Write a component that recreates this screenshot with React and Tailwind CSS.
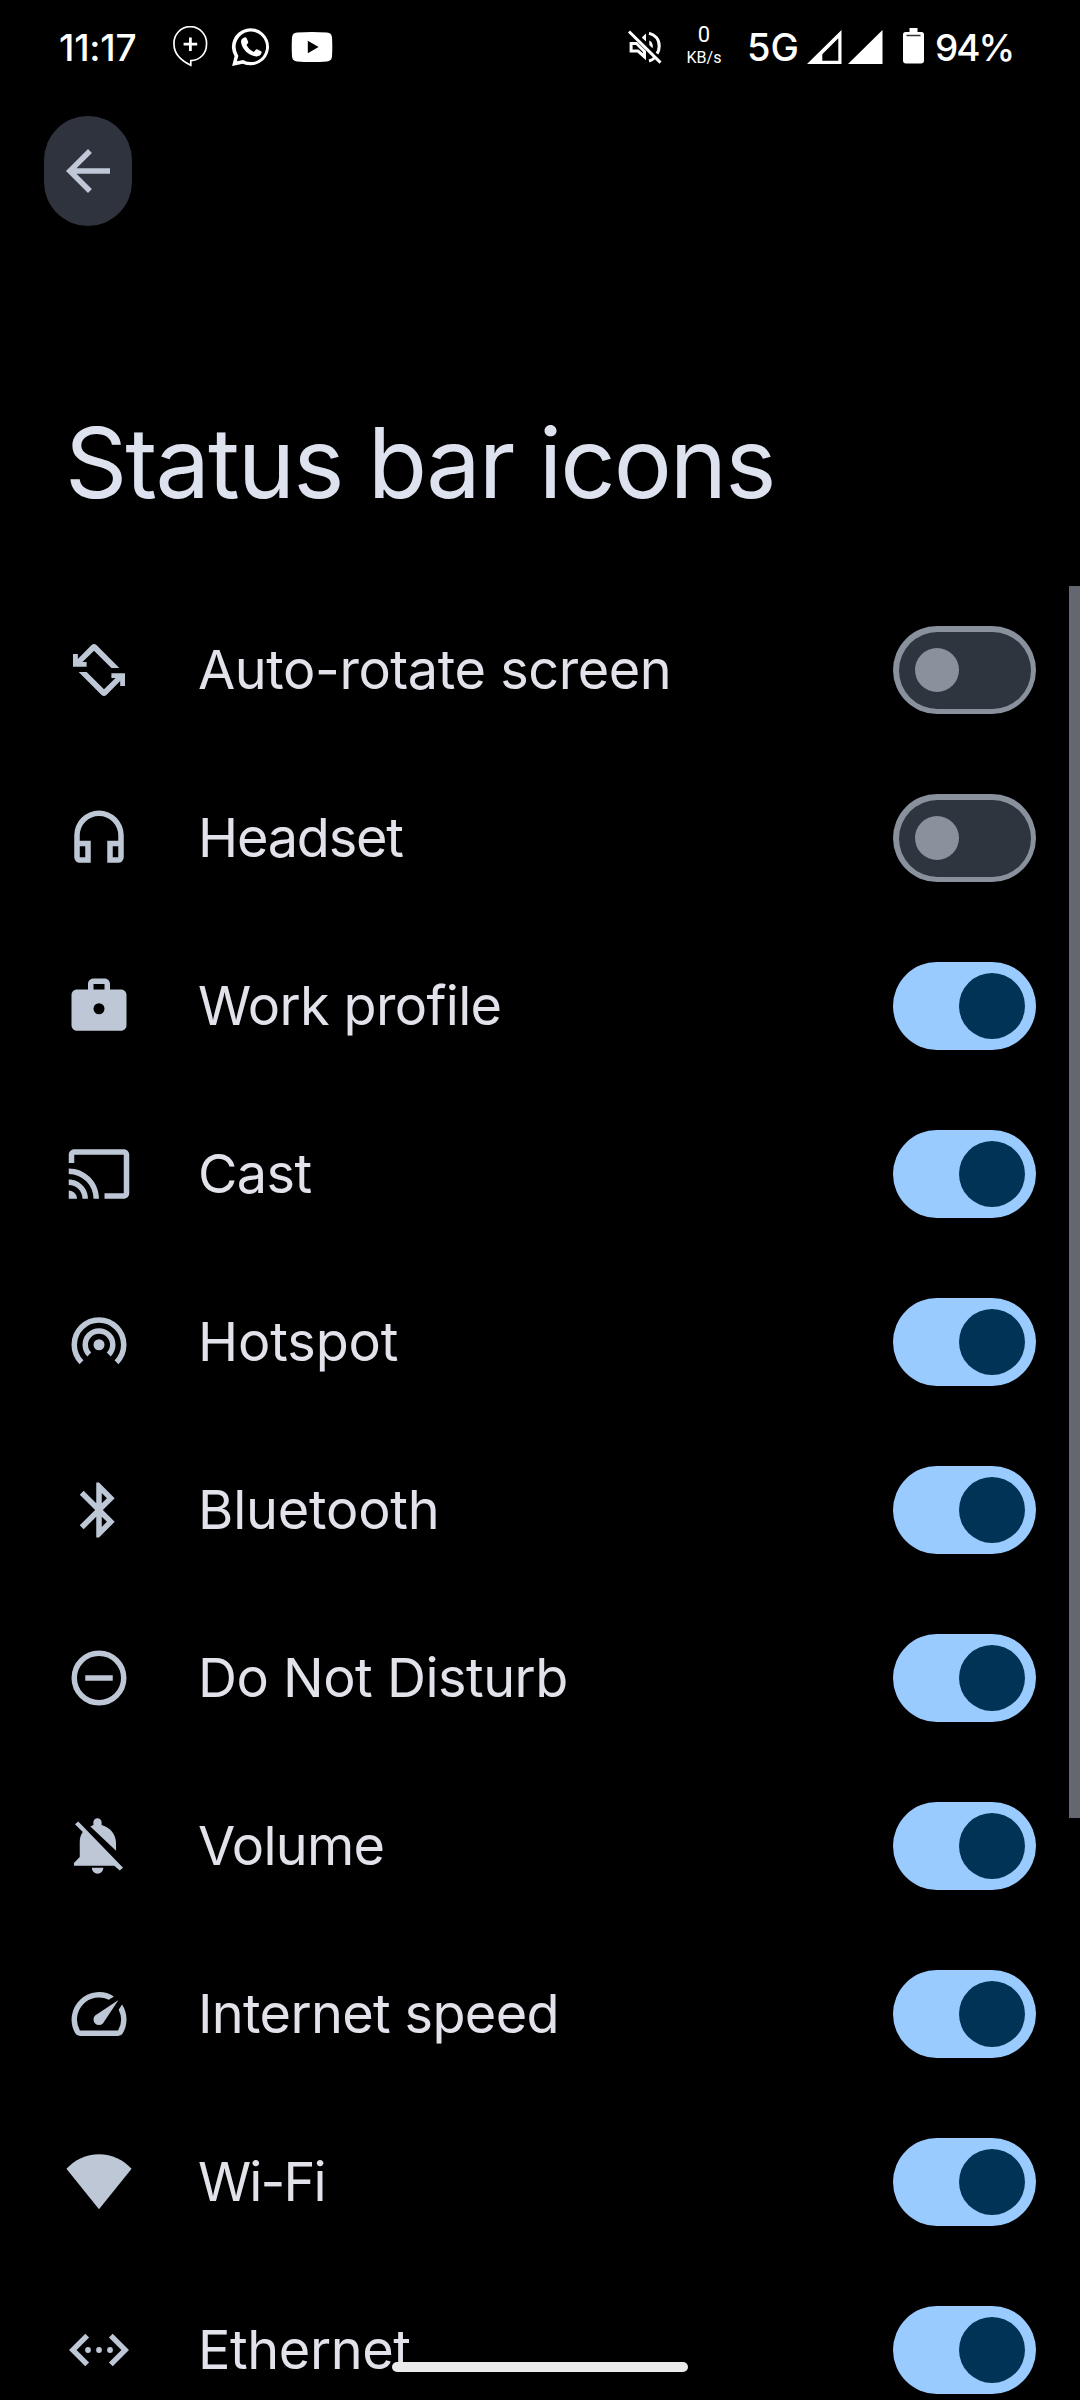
const glyphs = {
  rotate: (
    <g>
      <path d="M2.54 6.2H4.3V8L9.3 2.95Q10.18 2.15 11.06 2.95L19.4 11.27H16.5L10.18 5 6 9.1H7.5V10.8H2.54Z" />
      <path d="M21.46 17.8H19.7V16L14.7 21.05Q13.82 21.85 12.94 21.05L4.6 12.73H7.5L13.82 19 18 14.9H16.5V13.2H21.46Z" />
    </g>
  ),
  headset: (
    <path d="M12 2a9 9 0 0 0-9 9v8a2 2 0 0 0 2 2h4v-8H5v-2a7 7 0 0 1 14 0v2h-4v8h4a2 2 0 0 0 2-2v-8a9 9 0 0 0-9-9zM7 15v4H5v-4h2zm12 4h-2v-4h2v4z" />
  ),
  work: (
    <path
      fillRule="evenodd"
      d="M20 6h-4V4c0-1.11-.89-2-2-2h-4c-1.11 0-2 .89-2 2v2H4c-1.11 0-2 .89-2 2v11c0 1.11.89 2 2 2h16c1.11 0 2-.89 2-2V8c0-1.11-.89-2-2-2zm-6 0h-4V4h4v2zM12 11a2 2 0 1 0 0 4 2 2 0 0 0 0-4z"
    />
  ),
  cast: (
    <path d="M21 3H3c-1.1 0-2 .9-2 2v3h2V5h18v14h-7v2h7c1.1 0 2-.9 2-2V5c0-1.1-.9-2-2-2zM1 18v3h3c0-1.66-1.34-3-3-3zm0-4v2c2.76 0 5 2.24 5 5h2c0-3.87-3.13-7-7-7zm0-4v2a9 9 0 0 1 9 9h2c0-6.08-4.93-11-11-11z" />
  ),
  hotspot: (
    <g>
      <circle cx="12" cy="13" r="2" />
      <path d="M5.64 19.36A9 9 0 1 1 18.36 19.36M8.46 16.54A5 5 0 1 1 15.54 16.54" fill="none" stroke="currentColor" strokeWidth="2" />
    </g>
  ),
  bluetooth: (
    <path d="M17.71 7.71L12 2h-1v7.59L6.41 5 5 6.41 10.59 12 5 17.59 6.41 19 11 14.41V22h1l5.71-5.71-4.3-4.29 4.3-4.29zM13 5.83l1.88 1.88L13 9.59V5.83zm1.88 10.46L13 18.17v-3.76l1.88 1.88z" />
  ),
  dnd: (
    <g>
      <circle cx="12" cy="12" r="9" fill="none" stroke="currentColor" strokeWidth="2" />
      <path d="M7 11h10v2H7z" />
    </g>
  ),
  volume: (
    <g>
      <path d="M3.27 4.1 4.45 3.05 20.75 19.9 19.55 20.95 17.55 19.15H2.9V18.2L5 16V10.6C5 9.2 5.3 8 6.1 6.95Z" />
      <path d="M8.85 4.95C9.3 4.7 9.6 4.55 9.95 4.4V3.4a1.5 1.5 0 0 1 3 0v1c3.2.9 5.25 3.4 5.25 6.6v2.7Z" />
      <path d="M9.4 19.95h4.2a2.1 2.1 0 0 1-4.2 0z" />
    </g>
  ),
  speed: (
    <path d="M20.38 8.57l-1.23 1.85a8 8 0 0 1-.22 7.58H5.07A8 8 0 0 1 15.58 6.85l1.85-1.23A10 10 0 0 0 3.35 19a2 2 0 0 0 1.72 1h13.85a2 2 0 0 0 1.74-1 10 10 0 0 0-.27-10.44zm-9.79 6.84a2 2 0 0 0 2.83 0l5.66-8.49-8.49 5.66a2 2 0 0 0 0 2.83z" />
  ),
  wifi: <path d="M12 1.9C7.3 1.9 3.1 3.95.15 7.2L12 21.9 23.85 7.2C20.9 3.95 16.7 1.9 12 1.9z" />,
  ethernet: (
    <g>
      <path d="M7 6.1 1.1 12 7 17.9 8.4 16.55 3.85 12 8.4 7.45zM17 6.1 22.9 12 17 17.9 15.6 16.55 20.15 12 15.6 7.45z" />
      <circle cx="8" cy="12" r="1.05" />
      <circle cx="12" cy="12" r="1.05" />
      <circle cx="16" cy="12" r="1.05" />
    </g>
  ),
};

const rows = [
  { icon: "rotate", label: "Auto-rotate screen", on: false, track: "tracking-[-0.43px]" },
  { icon: "headset", label: "Headset", on: false, track: "tracking-[-1.2px]" },
  { icon: "work", label: "Work profile", on: true, track: "tracking-[-0.66px]" },
  { icon: "cast", label: "Cast", on: true, track: "tracking-[-0.6px]" },
  { icon: "hotspot", label: "Hotspot", on: true, track: "tracking-[-0.13px]" },
  { icon: "bluetooth", label: "Bluetooth", on: true, track: "tracking-[-0.2px]" },
  { icon: "dnd", label: "Do Not Disturb", on: true, track: "tracking-[-0.5px]" },
  { icon: "volume", label: "Volume", on: true, track: "tracking-[-0.75px]" },
  { icon: "speed", label: "Internet speed", on: true, track: "tracking-[-0.65px]" },
  { icon: "wifi", label: "Wi-Fi", on: true, track: "tracking-[-1.9px]" },
  { icon: "ethernet", label: "Ethernet", on: true, track: "tracking-[-0.4px]" },
];

function Toggle({ on }) {
  return on ? (
    <span className="flex h-[88px] w-[143px] items-center justify-end rounded-full bg-[#99cbff] pr-[11px]">
      <span className="size-[66px] rounded-full bg-[#003355]" />
    </span>
  ) : (
    <span className="flex h-[88px] w-[143px] rounded-full bg-[#89919d] p-[5.5px]">
      <span className="flex flex-1 items-center rounded-full bg-[#2e353f] pl-[16.5px]">
        <span className="size-[44px] rounded-full bg-[#89919d]" />
      </span>
    </span>
  );
}

function StatusBar() {
  return (
    <header className="flex h-[94px] shrink-0 items-center pr-[68px] pl-[59px] text-white">
      <span className="w-[113px] text-[37px] leading-none font-medium tracking-[-0.2px]">11:17</span>
      <svg className="h-[42px] w-[36px]" viewBox="172 26 36 42" fill="none" stroke="#fff">
        <path d="M190.8 66.200V60.700C200 60.500 206.500 53.200 206.500 44.500A16.300 16.500 0 1 0 174 44.500C174 53.500 181 60.500 190.800 65.300Z" strokeWidth="1.7" />
        <path d="M190.4 37.5V51M183.6 44.2H197.200" strokeWidth="2.8" />
      </svg>
      <svg className="ml-[22px] h-[42px] w-[42px]" viewBox="0 0 24 24" fill="#fff">
        <path fillRule="evenodd" d="M1.2 22.8 2.6 17.300A10.600 10.600 0 1 1 7.300 21.500ZM3.900 20.100 7.500 19.400A8.700 8.700 0 1 0 4.400 16.300L4.800 17Z" />
        <path d="M8.2 6.600c.6-.3 1.100 0 1.400.6l.7 1.600c.2.5.1.8-.2 1.200l-.7.9c.9 1.700 2.200 3 4.200 3.900l1-1.100c.3-.4.6-.5 1.100-.3l1.800.9c.5.2.7.6.5 1.200-.4 1.300-1.600 2-3 1.900-4.500-.6-8.300-4.200-8.700-8.400-.1-1 .7-2 1.900-2.400Z" />
      </svg>
      <svg className="ml-[19px] h-[30px] w-[42px]" viewBox="0 0 42 30">
        <path fill="#fff" fillRule="evenodd" d="M6 .6Q21-.4 36 .6Q40.500.8 41 5.500Q41.600 15 41 24.500Q40.500 29.200 36 29.400Q21 30.400 6 29.400Q1.500 29.200 1 24.500Q.4 15 1 5.500Q1.500.8 6 .6ZM16.800 8.800V21.200L27.600 15Z" />
      </svg>

      <svg className="ml-auto h-[36px] w-[36px]" viewBox="628 29 36 36" fill="#fff">
        <path d="M630 31.500 661.500 62.600" stroke="#fff" strokeWidth="3" />
        <path fillRule="evenodd" d="M630.600 42H638L647 51V60.200L638.300 52.400H630.600ZM633.600 45V49.400H639.500L643.900 53.300V52L637 45Z" />
        <path d="M647 33.500V41.500L642.800 37.400Z" />
        <path d="M650.300 40.600C652.600 41.700 653.800 43.800 653.800 46.300L653.500 48.300 650.300 45Z" />
        <path d="M650 33.300C656.200 34.800 660.200 39.600 660.200 46.200C660.200 49 659.400 51.500 658 53.600M656 57.500C654 59.400 652.300 60.300 650 60.900" fill="none" stroke="#fff" strokeWidth="3.100" />
      </svg>
      <div className="ml-[22px] flex w-[38px] flex-col items-center leading-none font-[Roboto,sans-serif]">
        <span className="-mt-[2px] text-[22px] leading-[24px]">0</span>
        <span className="text-[16px] leading-[22px]">KB/s</span>
      </div>
      <span className="ml-[24px] w-[60px] text-[38px] leading-none font-medium whitespace-nowrap">5G</span>
      <svg className="h-[34px] w-[77px]" viewBox="0 0 77 34" fill="#fff">
        <path fillRule="evenodd" d="M0 34 34.500 0V34ZM15.300 30.800H31.300V8.200L15.300 24.300Z" />
        <path d="M41 34 75.500 0V34Z" />
      </svg>
      <svg className="-mt-[3px] ml-[19px] h-[36px] w-[21px]" viewBox="0 0 21 36">
        <path fill="#fff" d="M6.500 0H14.500V4H18.500A2.500 2.500 0 0 1 21 6.500V32.500A3 3 0 0 1 18 35.500H3A3 3 0 0 1 0 32.500V6.500A2.500 2.500 0 0 1 2.500 4H6.500Z" />
        <path d="M3.500 7.500H17.500" stroke="#333" strokeWidth="1.500" />
      </svg>
      <span className="ml-[11px] w-[77px] text-[37px] leading-none font-medium tracking-[-2px] whitespace-nowrap">94%</span>
    </header>
  );
}

export default function App() {
  return (
    <div className="relative flex h-[2400px] w-[1080px] flex-col overflow-hidden bg-black font-[Inter,sans-serif] text-[#e1e2ea]">
      <StatusBar />
      <div className="flex h-[492px] shrink-0 flex-col items-start pt-[22px]">
        <button className="ml-[44px] flex h-[110px] w-[88px] items-center justify-center rounded-full bg-[#2e333d]" aria-label="Back">
          <svg className="size-[66px]" viewBox="0 0 24 24" fill="#c0c7d6">
            <path d="M20 11H7.830l5.590-5.590L12 4l-8 8 8 8 1.410-1.410L7.830 13H20v-2z" />
          </svg>
        </button>
        <h1 className="mt-[177px] ml-[65px] text-[97px] leading-[120px] font-normal tracking-[-1.950px] whitespace-nowrap text-[#dde2ee]">
          Status bar icons
        </h1>
      </div>
      <ul className="flex shrink-0 flex-col">
        {rows.map((r) => (
          <li key={r.icon} className="flex h-[168px] shrink-0 items-center pr-[44px] pl-[66px]">
            <svg className="size-[66px] text-[#bec7d5]" viewBox="0 0 24 24" fill="currentColor">
              {glyphs[r.icon]}
            </svg>
            <span className={"ml-[66px] flex-1 text-[54px] leading-[72px] whitespace-nowrap " + r.track}>{r.label}</span>
            <Toggle on={r.on} />
          </li>
        ))}
      </ul>
      <div className="absolute top-[586px] right-0 h-[1232px] w-[11px] bg-[#64676f]" />
      <div className="absolute top-[2362px] left-[392px] h-[10px] w-[296px] rounded-full bg-[#ebebeb]" />
    </div>
  );
}
